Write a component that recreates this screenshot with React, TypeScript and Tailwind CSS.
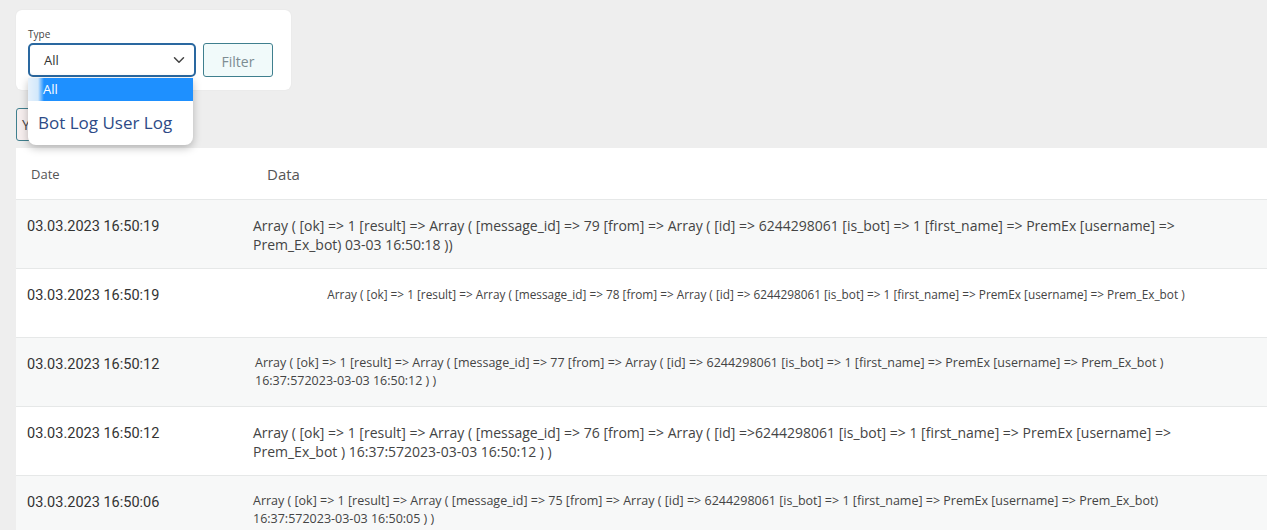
import { ChevronDown } from "lucide-react";

const rows = [
  {
    id: 79,
    date: "03.03.2023 16:50:19",
    data: "Array ( [ok] => 1 [result] => Array ( [message_id] => 79 [from] => Array ( [id] => 6244298061 [is_bot] => 1 [first_name] => PremEx [username] => Prem_Ex_bot) 03-03 16:50:18 ))",
    className: "text-[14px] leading-[19px] pr-[66px]",
    bg: "bg-[#f7f8f8]",
  },
  {
    id: 78,
    date: "03.03.2023 16:50:19",
    data: "Array ( [ok] => 1 [result] => Array ( [message_id] => 78 [from] => Array ( [id] => 6244298061 [is_bot] => 1 [first_name] => PremEx [username] => Prem_Ex_bot )",
    className: "text-[11.8px] leading-[19px] text-center pr-[8px]",
    bg: "bg-white",
  },
  {
    id: 77,
    date: "03.03.2023 16:50:12",
    data: "Array ( [ok] => 1 [result] => Array ( [message_id] => 77 [from] => Array ( [id] => 6244298061 [is_bot] => 1 [first_name] => PremEx [username] => Prem_Ex_bot ) 16:37:572023-03-03 16:50:12 ) )",
    className: "text-[12.5px] leading-[18px] pl-[2px] pr-[66px]",
    bg: "bg-[#f7f8f8]",
  },
  {
    id: 76,
    date: "03.03.2023 16:50:12",
    data: "Array ( [ok] => 1 [result] => Array ( [message_id] => 76 [from] => Array ( [id] =>6244298061 [is_bot] => 1 [first_name] => PremEx [username] => Prem_Ex_bot ) 16:37:572023-03-03 16:50:12 ) )",
    className: "text-[14px] leading-[19px] pr-[66px]",
    bg: "bg-white",
  },
  {
    id: 75,
    date: "03.03.2023 16:50:06",
    data: "Array ( [ok] => 1 [result] => Array ( [message_id] => 75 [from] => Array ( [id] => 6244298061 [is_bot] => 1 [first_name] => PremEx [username] => Prem_Ex_bot) 16:37:572023-03-03 16:50:05 ) )",
    className: "text-[12.5px] leading-[18px] pr-[66px]",
    bg: "bg-[#f7f8f8]",
  },
];

export default function App() {
  return (
    <div className="relative min-h-screen overflow-hidden bg-[#eeeeee] pl-4 pt-[10px] font-['Open_Sans',sans-serif]">
      {/* filter card */}
      <div className="w-[275px] rounded-md bg-white px-3 pb-[13px] pt-[18px] shadow-[0_0_2px_rgba(0,0,0,0.06)]">
        <label className="block text-[10px] leading-[12px] text-[#444]">Type</label>
        <div className="mt-[3px] flex gap-[7px]">
          <div className="flex h-[34px] w-[168px] items-center justify-between rounded-[5px] border-2 border-[#2a68a0] pl-[14px] pr-[6px] text-[13px] text-[#333]">
            <span className="pt-[2px]">All</span>
            <ChevronDown size={18} strokeWidth={2} className="text-[#444]" />
          </div>
          <button className="h-[34px] w-[70px] rounded-[3px] border border-[#3f7f8e] bg-[#f1fafa] pt-[2px] text-[14px] text-[#7d8c92]">
            Filter
          </button>
        </div>
      </div>

      {/* open select list */}
      <div className="absolute left-[28px] top-[78px] z-10 w-[165px] overflow-hidden rounded-b-lg bg-white shadow-[0_3px_8px_rgba(0,0,0,0.25)]">
        <div className="flex h-[23px] items-center bg-[linear-gradient(90deg,#e6f1fb_0px,#d2e8fb_10px,#1e90ff_16px)] pl-[15px] text-[13px] text-white">
          All
        </div>
        <div className="flex h-[44px] items-center pl-[10px] text-[17px] text-[#2d4a86]">
          Bot Log User Log
        </div>
      </div>

      <button className="mt-[18px] h-[33px] w-[70px] rounded-[3px] border border-[#3f7f8e] bg-[#f6eeee] pl-[5px] text-left text-[14px] text-[#444]">
        Y
      </button>

      {/* log table */}
      <div className="mt-[7px] bg-white">
        <div className="flex h-[52px] items-center border-b border-[#e6e8e8] text-[#555]">
          <div className="w-[251px] pl-[15px] pt-[2px] text-[13px]">Date</div>
          <div className="pt-[2px] text-[15px]">Data</div>
        </div>
        {rows.map((row) => (
          <div key={row.id} className={`flex h-[69px] border-b border-[#e6e8e8] ${row.bg}`}>
            <div className="w-[237px] shrink-0 pl-[11px] pt-[18px] font-['Roboto',sans-serif] text-[14.5px] leading-[18px] text-[#333]">
              {row.date}
            </div>
            <div className={`flex-1 pt-[16px] text-[#444] ${row.className}`}>{row.data}</div>
          </div>
        ))}
      </div>
    </div>
  );
}
